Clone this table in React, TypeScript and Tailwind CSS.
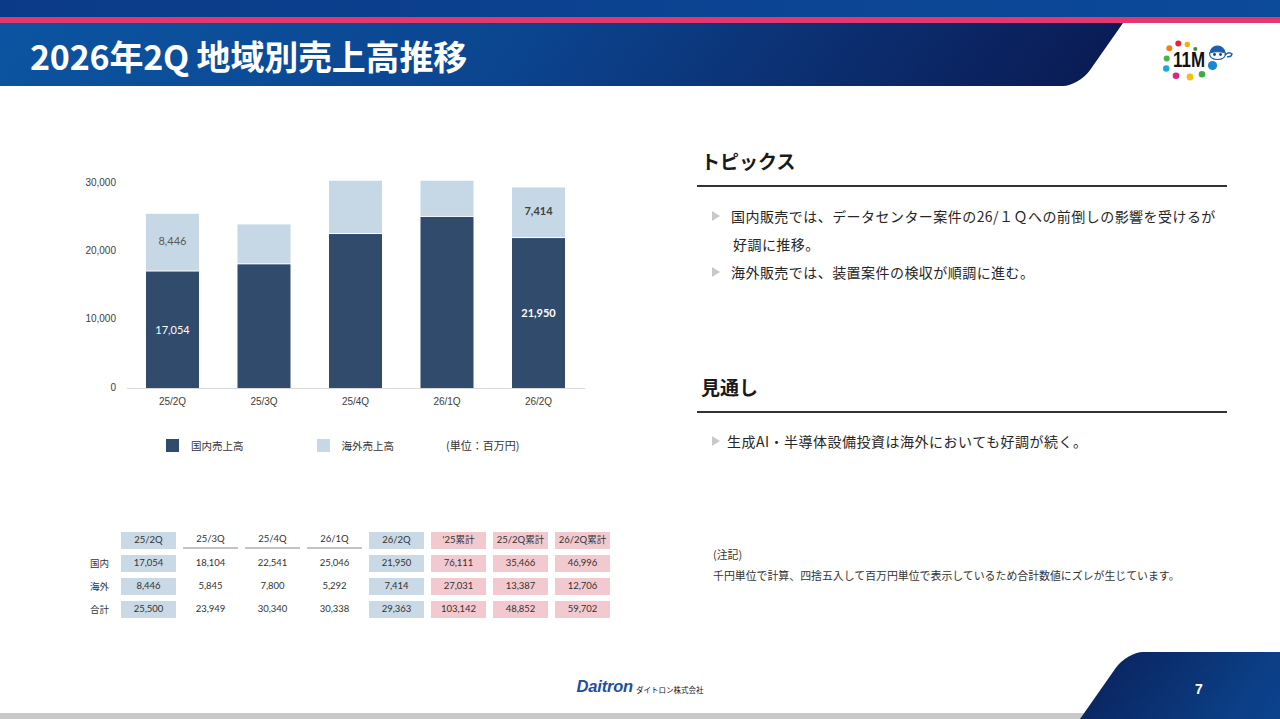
import React from "react";

const JP = '"Noto Sans CJK JP", "Noto Sans", sans-serif';

const bars = [
  { q: "25/2Q", d: 17054, o: 8446 },
  { q: "25/3Q", d: 18104, o: 5845 },
  { q: "25/4Q", d: 22541, o: 7800 },
  { q: "26/1Q", d: 25046, o: 5292 },
  { q: "26/2Q", d: 21950, o: 7414 },
];

const BASE = 218;
const K = 0.00683;
const yOf = (v: number) => BASE - v * K;

function Chart() {
  return (
    <svg width="520" height="245" viewBox="0 0 520 245" className="block">
      {[30000, 20000, 10000, 0].map((v) => (
        <text
          key={v}
          x={36}
          y={yOf(v)}
          textAnchor="end"
          dominantBaseline="middle"
          fontSize="10"
          fill="#404040"
          fontFamily='"Liberation Sans", Arial, sans-serif'
        >
          {v.toLocaleString("en-US")}
        </text>
      ))}
      <line x1={47} x2={505} y1={BASE + 0.5} y2={BASE + 0.5} stroke="#d9d9d9" strokeWidth="1" />
      {bars.map((b, i) => {
        const x = 66 + i * 91.5;
        const dt = yOf(b.d);
        const tt = yOf(b.d + b.o);
        return (
          <g key={b.q}>
            <rect x={x} y={tt} width={53} height={dt - tt - 1} fill="#c6d8e5" />
            <rect x={x} y={dt} width={53} height={BASE - dt} fill="#304b6c" />
            <text
              x={x + 26.5}
              y={232}
              textAnchor="middle"
              dominantBaseline="middle"
              fontSize="10"
              fill="#404040"
              fontFamily='"Liberation Sans", Arial, sans-serif'
            >
              {b.q}
            </text>
          </g>
        );
      })}
      <g fontFamily='Lato, "Open Sans", sans-serif' fontSize="11" textAnchor="middle" dominantBaseline="middle">
        <text x={92.5} y={72} fill="#595959">8,446</text>
        <text x={92.5} y={161} fill="#ffffff">17,054</text>
        <text x={458.5} y={42.5} fill="#404040" fontWeight="700">7,414</text>
        <text x={458.5} y={144} fill="#ffffff" fontWeight="700">21,950</text>
      </g>
    </svg>
  );
}

const head = ["25/2Q", "25/3Q", "25/4Q", "26/1Q", "26/2Q", "'25累計", "25/2Q累計", "26/2Q累計"];
const rows: [string, string[]][] = [
  ["国内", ["17,054", "18,104", "22,541", "25,046", "21,950", "76,111", "35,466", "46,996"]],
  ["海外", ["8,446", "5,845", "7,800", "5,292", "7,414", "27,031", "13,387", "12,706"]],
  ["合計", ["25,500", "23,949", "30,340", "30,338", "29,363", "103,142", "48,852", "59,702"]],
];

function cellBg(i: number) {
  if (i === 0 || i === 4) return "bg-[#c9dae6]";
  if (i >= 5) return "bg-[#f2c9cf]";
  return "";
}

function Table() {
  return (
    <div
      className="grid grid-cols-[26px_repeat(8,55px)] gap-x-[7px] gap-y-[6px] text-[9.5px] text-[#333333]"
      style={{ fontFamily: 'Lato, "Noto Sans CJK JP", sans-serif' }}
    >
      <div />
      {head.map((h, i) => (
        <div
          key={h}
          className={`h-[17px] flex items-center justify-center ${cellBg(i)} ${
            cellBg(i) === "" ? "border-b-2 border-[#c4c4c4]" : ""
          }`}
        >
          {h}
        </div>
      ))}
      {rows.map(([label, vals]) => (
        <React.Fragment key={label}>
          <div className="h-[17px] flex items-center pl-[2px]" style={{ fontFamily: JP }}>
            {label}
          </div>
          {vals.map((v, i) => (
            <div key={i} className={`h-[17px] flex items-center justify-center ${cellBg(i)}`}>
              {v}
            </div>
          ))}
        </React.Fragment>
      ))}
    </div>
  );
}

function Tri() {
  return (
    <svg width="8" height="10" viewBox="0 0 8 10" className="shrink-0">
      <polygon points="0,0 8,5 0,10" fill="#c9c9c9" />
    </svg>
  );
}

function Logo11M() {
  return (
    <svg width="80" height="45" viewBox="1158 38 80 45">
      <circle cx="1169.3" cy="48.3" r="3" fill="#ef7d22" />
      <circle cx="1178.3" cy="43.6" r="3" fill="#e5263e" />
      <circle cx="1187.3" cy="44.5" r="2.7" fill="#e8b30f" />
      <circle cx="1195.3" cy="49" r="2" fill="#3f8a3a" />
      <circle cx="1166.7" cy="58.5" r="3" fill="#43b549" />
      <circle cx="1166.2" cy="68.5" r="3.2" fill="#1fa5dd" />
      <circle cx="1176" cy="75.7" r="3.3" fill="#e3207c" />
      <circle cx="1190" cy="77" r="3.4" fill="#f3c014" />
      <circle cx="1202" cy="74.3" r="3.3" fill="#3cab48" />
      <circle cx="1212.5" cy="65.5" r="4.6" fill="#1a88cf" />
      <text
        x="1173"
        y="66.7"
        fontSize="22"
        fontWeight="900"
        fill="#111"
        textLength="32"
        lengthAdjust="spacingAndGlyphs"
        fontFamily='"Liberation Sans", Arial, sans-serif'
      >
        11M
      </text>
      <path d="M1209.5 53 a8 7.5 0 0 1 16 0 z" fill="#1d5fae" />
      <path d="M1209.5 53 q8 -2.5 16 0 q0 6.5 -8 6.5 q-8 0 -8 -6.5z" fill="#ffffff" stroke="#1d5fae" strokeWidth="1.2" />
      <circle cx="1214.5" cy="54.5" r="1.4" fill="#1d3f7a" />
      <circle cx="1220.5" cy="54.5" r="1.4" fill="#1d3f7a" />
      <path d="M1225 55 q4 -4 7 -1 q-1 3.5 -5 2.5" fill="none" stroke="#1d5fae" strokeWidth="1.4" />
    </svg>
  );
}

export default function App() {
  return (
    <div className="w-[1280px] h-[719px] overflow-hidden bg-white flex flex-col" style={{ fontFamily: JP }}>
      {/* Header */}
      <header className="h-[86px] flex flex-col shrink-0">
        <div className="h-[17px] bg-gradient-to-r from-[#0b3b88] to-[#0c4a9a]" />
        <div className="h-[6px] bg-[#e2386f]" />
        <div className="relative h-[63px] flex">
          <div className="absolute top-0 left-[-60px] h-[63px] w-[1183px] origin-top skew-x-[-35deg] rounded-br-[16px] bg-gradient-to-r from-[#0c56a3] via-[#0b4590] to-[#0a1c56]" />
          <h1 className="relative pl-[30px] pt-[13px] text-[34px] font-bold leading-[40px] text-white tracking-[-0.2px]">
            2026年2Q 地域別売上高推移
          </h1>
          <div className="relative ml-auto mr-[42px] mt-[15px]">
            <Logo11M />
          </div>
        </div>
      </header>

      {/* Main */}
      <main className="h-[566px] flex shrink-0">
        <section className="w-[620px] pl-[80px] pt-[84px] flex flex-col">
          <Chart />
          <div className="mt-[24px] ml-[86px] flex items-center h-[13px] text-[10.5px] text-[#333333]">
            <span className="w-[13px] h-[13px] bg-[#304b6c]" />
            <span className="ml-[12px]">国内売上高</span>
            <span className="ml-[73px] w-[13px] h-[13px] bg-[#c6d8e5]" />
            <span className="ml-[12px]">海外売上高</span>
            <span className="ml-[52px] text-[11px]">(単位：百万円)</span>
          </div>
          <div className="mt-[80px] ml-[8px]">
            <Table />
          </div>
        </section>

        <section className="ml-[77px] w-[530px] pt-[63px] flex flex-col text-[#262626]">
          <div className="pb-[12px] border-b-2 border-[#333333] pl-[4px] text-[19px] font-bold leading-[24px] text-[#1a1a1a]">
            トピックス
          </div>
          <div className="mt-[15px] pl-[15px] text-[14px] leading-[28px] tracking-[0.45px]">
            <div className="flex items-start">
              <div className="h-[28px] flex items-center">
                <Tri />
              </div>
              <div className="ml-[11px]">
                国内販売では、データセンター案件の26/１Ｑへの前倒しの影響を受けるが
                <br />
                <span className="pl-[2px]">好調に推移。</span>
              </div>
            </div>
            <div className="flex items-start">
              <div className="h-[28px] flex items-center">
                <Tri />
              </div>
              <div className="ml-[11px]">海外販売では、装置案件の検収が順調に進む。</div>
            </div>
          </div>

          <div className="mt-[89px] pb-[12px] border-b-2 border-[#333333] pl-[4px] text-[19px] font-bold leading-[24px] text-[#1a1a1a]">
            見通し
          </div>
          <div className="mt-[14px] pl-[15px] text-[14px] leading-[28px] tracking-[0.5px]">
            <div className="flex items-start">
              <div className="h-[28px] flex items-center">
                <Tri />
              </div>
              <div className="ml-[7px]">生成AI・半導体設備投資は海外においても好調が続く。</div>
            </div>
          </div>

          <div className="mt-[89px] pl-[16px] text-[10.9px] leading-[21px] text-[#333333]">
            <div>(注記)</div>
            <div>千円単位で計算、四捨五入して百万円単位で表示しているため合計数値にズレが生じています。</div>
          </div>
        </section>
      </main>

      {/* Footer */}
      <footer className="relative h-[67px] shrink-0 flex flex-col">
        <div className="flex-1 flex items-center justify-center pt-[8px]">
          <div className="flex items-end gap-[3px]">
            <span
              className="text-[16.5px] font-bold italic leading-none text-[#1d4f9e] tracking-[-0.2px]"
              style={{ fontFamily: '"Liberation Sans", Arial, sans-serif' }}
            >
              Daitron
            </span>
            <span className="text-[7.5px] leading-none text-[#111] pb-[1px]">ダイトロン株式会社</span>
          </div>
        </div>
        <div className="h-[6px] bg-[#c9c9c9]" />
        <div className="absolute top-0 bottom-0 left-[1080px] w-[300px] origin-bottom skew-x-[-35deg] rounded-tl-[16px] bg-gradient-to-r from-[#0a2763] via-[#0b3f86] to-[#0c4a98]" />
        <span
          className="absolute left-[1195px] top-[28px] text-[14px] font-bold leading-[18px] text-white"
          style={{ fontFamily: '"Liberation Sans", Arial, sans-serif' }}
        >
          7
        </span>
      </footer>
    </div>
  );
}
